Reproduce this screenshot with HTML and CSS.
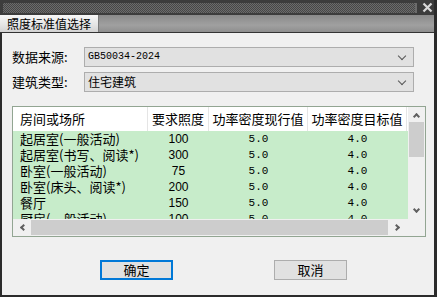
FILE: index.html
```html
<!DOCTYPE html>
<html lang="zh">
  <head>
    <meta charset="UTF-8" />
    <title>照度标准值选择</title>
    <link rel="stylesheet" href="styles.css">
  </head>
  <body>
    <div class="window">
      <div class="titlebar">
        <div class="grip"></div>
        <div class="close">
          <svg width="11" height="11" viewBox="0 0 11 11"><path d="M1.5 1.5 L9.5 9.5 M9.5 1.5 L1.5 9.5" stroke="#d8d8d8" stroke-width="2.2"/></svg>
        </div>
      </div>
      <div class="tabbar">
        <div class="tab">照度标准值选择</div>
      </div>
      <div class="content">
        <div class="field">
          <label>数据来源:</label>
          <div class="select mono">GB50034-2024<span class="caret"></span></div>
        </div>
        <div class="field">
          <label>建筑类型:</label>
          <div class="select">住宅建筑<span class="caret"></span></div>
        </div>

        <div class="listbox">
          <div class="list-main">
            <div class="list-view">
              <div class="row head">
                <div class="c1">房间或场所</div>
                <div class="c2">要求照度</div>
                <div class="c3">功率密度现行值</div>
                <div class="c4">功率密度目标值</div>
              </div>
              <div class="row">
                <div class="c1">起居室(一般活动)</div>
                <div class="c2">100</div>
                <div class="c3 num">5.0</div>
                <div class="c4 num">4.0</div>
              </div>
              <div class="row">
                <div class="c1">起居室(书写、阅读*)</div>
                <div class="c2">300</div>
                <div class="c3 num">5.0</div>
                <div class="c4 num">4.0</div>
              </div>
              <div class="row">
                <div class="c1">卧室(一般活动)</div>
                <div class="c2">75</div>
                <div class="c3 num">5.0</div>
                <div class="c4 num">4.0</div>
              </div>
              <div class="row">
                <div class="c1">卧室(床头、阅读*)</div>
                <div class="c2">200</div>
                <div class="c3 num">5.0</div>
                <div class="c4 num">4.0</div>
              </div>
              <div class="row">
                <div class="c1">餐厅</div>
                <div class="c2">150</div>
                <div class="c3 num">5.0</div>
                <div class="c4 num">4.0</div>
              </div>
              <div class="row">
                <div class="c1">厨房(一般活动)</div>
                <div class="c2">100</div>
                <div class="c3 num">5.0</div>
                <div class="c4 num">4.0</div>
              </div>
            </div>
            <div class="vscroll">
              <span class="arrow up"></span>
              <div class="vtrack"><div class="vthumb"></div></div>
              <span class="arrow down"></span>
            </div>
          </div>
          <div class="list-bottom">
            <div class="hscroll">
              <span class="arrow left"></span>
              <div class="hthumb"></div>
              <span class="arrow right"></span>
            </div>
            <div class="corner"></div>
          </div>
        </div>

        <div class="buttons">
          <button class="btn default">确定</button>
          <button class="btn">取消</button>
        </div>
      </div>
    </div>
  </body>
</html>
```

FILE: styles.css
```css
body {
  margin: 0;
  font-family: "Noto Sans CJK SC", "Liberation Sans", sans-serif;
  font-size: 12px;
  color: #000;
  background: #2b2b2b;
}
.window {
  width: 432px;
  height: 295px;
  border-left: 2px solid #2b2b2b;
  border-right: 3px solid #2b2b2b;
  border-bottom: 2px solid #2b2b2b;
  background: #f0f0f0;
  display: flex;
  flex-direction: column;
}
.titlebar {
  height: 15px;
  margin-left: -2px;
  background: #3c3c3c;
  display: flex;
  align-items: center;
}
.grip {
  flex: 1;
  height: 10px;
  margin: 0 3px 0 3px;
  background-color: #4a4a4a;
  background-image: repeating-conic-gradient(#6b6b6b 0 25%, #474747 0 50%);
  background-size: 2px 2px;
  border-right: 2px solid #6b6b6b;
}
.close {
  width: 14px;
  height: 15px;
  display: flex;
  align-items: center;
  justify-content: center;
  margin-right: 0px;
}
.tabbar {
  height: 17px;
  margin-left: -2px;
  border-bottom: 1px solid #333;
  background: linear-gradient(#8a8a8a, #a0a0a0 60%, #8e8e8e);
  display: flex;
}
.tab {
  width: 91px;
  padding-left: 7px;
  background: linear-gradient(#f7f7f7, #e4e4e4 60%, #d2d2d2);
  border-right: 1px solid #7a7a7a;
  line-height: 17px;
  font-size: 12px;
}
.content {
  flex: 1;
  padding: 14px 9px 0 10px;
}
.field {
  display: flex;
  align-items: center;
  height: 20px;
  margin-bottom: 5px;
}
.field label {
  width: 72px;
  font-size: 13px;
  line-height: 20px;
}
.select {
  width: 325px;
  height: 18px;
  border: 1px solid #adadad;
  background: #e1e1e1;
  padding-left: 3px;
  line-height: 18px;
  font-size: 12px;
  position: relative;
}
.select.mono {
  font-family: "Liberation Mono", monospace;
  font-size: 10px;
}
.caret {
  position: absolute;
  right: 8px;
  top: 5px;
  width: 5px;
  height: 5px;
  border-right: 1px solid #555;
  border-bottom: 1px solid #555;
  transform: rotate(45deg);
}
.listbox {
  margin-top: 14px;
  width: 412px;
  height: 129px;
  border: 1px solid #92a592;
  background: #f0f0f0;
  display: flex;
  flex-direction: column;
}
.list-main {
  display: flex;
  height: 112px;
}
.list-view {
  width: 395px;
  overflow: hidden;
  background: #c7ecca;
}
.row {
  display: flex;
  height: 16px;
  line-height: 16px;
  font-size: 13px;
}
.row.head {
  height: 24px;
  line-height: 24px;
  background: #fff;
}
.row.head > div {
  border-right: 1px solid #e5e5e5;
  box-sizing: border-box;
}
.c1 { width: 135px; padding-left: 7px; box-sizing: border-box; white-space: nowrap; }
.c2 { width: 61px; text-align: center; }
.c3 { width: 99px; text-align: center; }
.c4 { width: 99px; text-align: center; }
.row .c2 { font-family: "Liberation Sans", sans-serif; font-size: 12px; }
.row.head .c2 { font-family: "Noto Sans CJK SC", sans-serif; font-size: 13px; }
.num {
  font-family: "Liberation Mono", monospace;
  font-size: 11px;
}
.vscroll {
  width: 17px;
  background: #f0f0f0;
  display: flex;
  flex-direction: column;
  align-items: center;
}
.vtrack {
  flex: 1;
  width: 100%;
}
.vthumb {
  margin: 3px 1px 0 1px;
  height: 35px;
  background: #cdcdcd;
}
.arrow {
  width: 5px;
  height: 5px;
  border-left: 2px solid #606060;
  border-top: 2px solid #606060;
  box-sizing: border-box;
  flex: none;
}
.arrow.up { margin-top: 7px; transform: rotate(45deg); }
.arrow.down { margin-bottom: 7px; transform: rotate(225deg); }
.arrow.left { margin-left: 8px; transform: rotate(-45deg); }
.arrow.right { margin-right: 8px; transform: rotate(135deg); }
.list-bottom {
  display: flex;
  height: 17px;
}
.hscroll {
  width: 395px;
  display: flex;
  align-items: center;
  background: #f0f0f0;
}
.hthumb {
  flex: none;
  width: 357px;
  height: 15px;
  margin: 0 6px 0 5px;
  background: #cdcdcd;
}
.corner {
  flex: 1;
  background: #f0f0f0;
}
.buttons {
  display: flex;
  margin-top: 23px;
  padding-left: 88px;
  gap: 101px;
}
.btn {
  width: 73px;
  height: 20px;
  padding: 0;
  border: 1px solid #adadad;
  background: #e1e1e1;
  font-family: "Noto Sans CJK SC", sans-serif;
  font-size: 13px;
  line-height: 16px;
  color: #000;
}
.btn.default {
  border: 2px solid #0078d7;
}
```
